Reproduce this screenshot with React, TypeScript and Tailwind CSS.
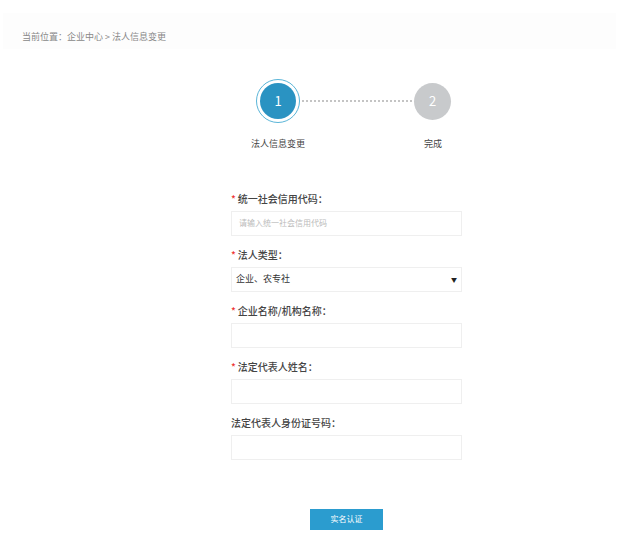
import React from "react";

const font = { fontFamily: '"Noto Sans CJK SC", "Noto Sans", sans-serif' };

function Field({
  label,
  required,
  placeholder,
}: {
  label: string;
  required?: boolean;
  placeholder?: string;
}) {
  return (
    <div className="flex flex-col">
      <div className="flex h-[14px] items-center text-[10px] font-medium text-[#444]">
        {required ? <span className="mr-[2px] text-[#e33]">*</span> : null}
        {label}
      </div>
      <div className="mt-[5px] flex h-[25px] items-center border border-[#efefef] bg-white px-[7px] text-[8px] text-[#bbb]">
        {placeholder}
      </div>
    </div>
  );
}

export default function App() {
  return (
    <div className="h-[549px] w-[619px] overflow-hidden bg-white" style={font}>
      <div className="h-[13px]" />
      <div className="mx-[3px] flex h-[36px] items-center bg-[#fdfdfd] pl-[19px] pt-[12px] text-[9px] text-[#888]">
        当前位置：企业中心 &gt; 法人信息变更
      </div>

      <div className="ml-[256px] mt-[30px] flex w-[195px] flex-col">
        <div className="flex items-center">
          <div className="flex h-[44px] w-[44px] items-center justify-center rounded-full border border-[#5ab5d8]">
            <div className="flex h-[36px] w-[36px] items-center justify-center rounded-full bg-[#2a93c2] text-[13px] text-white">
              1
            </div>
          </div>
          <div className="mx-[2px] flex-1 border-t-2 border-dotted border-[#c4c4c4]" />
          <div className="flex h-[37px] w-[37px] items-center justify-center rounded-full bg-[#c8cacc] text-[13px] text-white">
            2
          </div>
        </div>
        <div className="mt-[14px] flex justify-between text-[9px] text-[#444]">
          <span className="-ml-[5px]">法人信息变更</span>
          <span className="mr-[9px]">完成</span>
        </div>
      </div>

      <div className="ml-[231px] mt-[41px] flex w-[231px] flex-col gap-[12px]">
        <Field label="统一社会信用代码：" required placeholder="请输入统一社会信用代码" />
        <div className="flex flex-col">
          <div className="flex h-[14px] items-center text-[10px] font-medium text-[#444]">
            <span className="mr-[2px] text-[#e33]">*</span>
            法人类型：
          </div>
          <div className="mt-[5px] flex h-[25px] items-center justify-between border border-[#efefef] bg-white px-[4px] text-[9px] text-[#333]">
            <span>企业、农专社</span>
            <span className="text-[6px] text-[#222]">▼</span>
          </div>
        </div>
        <Field label="企业名称/机构名称：" required />
        <Field label="法定代表人姓名：" required />
        <Field label="法定代表人身份证号码：" />
      </div>

      <button className="ml-[310px] mt-[49px] block h-[21px] w-[73px] bg-[#2b9ccf] text-[8px] text-white">
        实名认证
      </button>
    </div>
  );
}
